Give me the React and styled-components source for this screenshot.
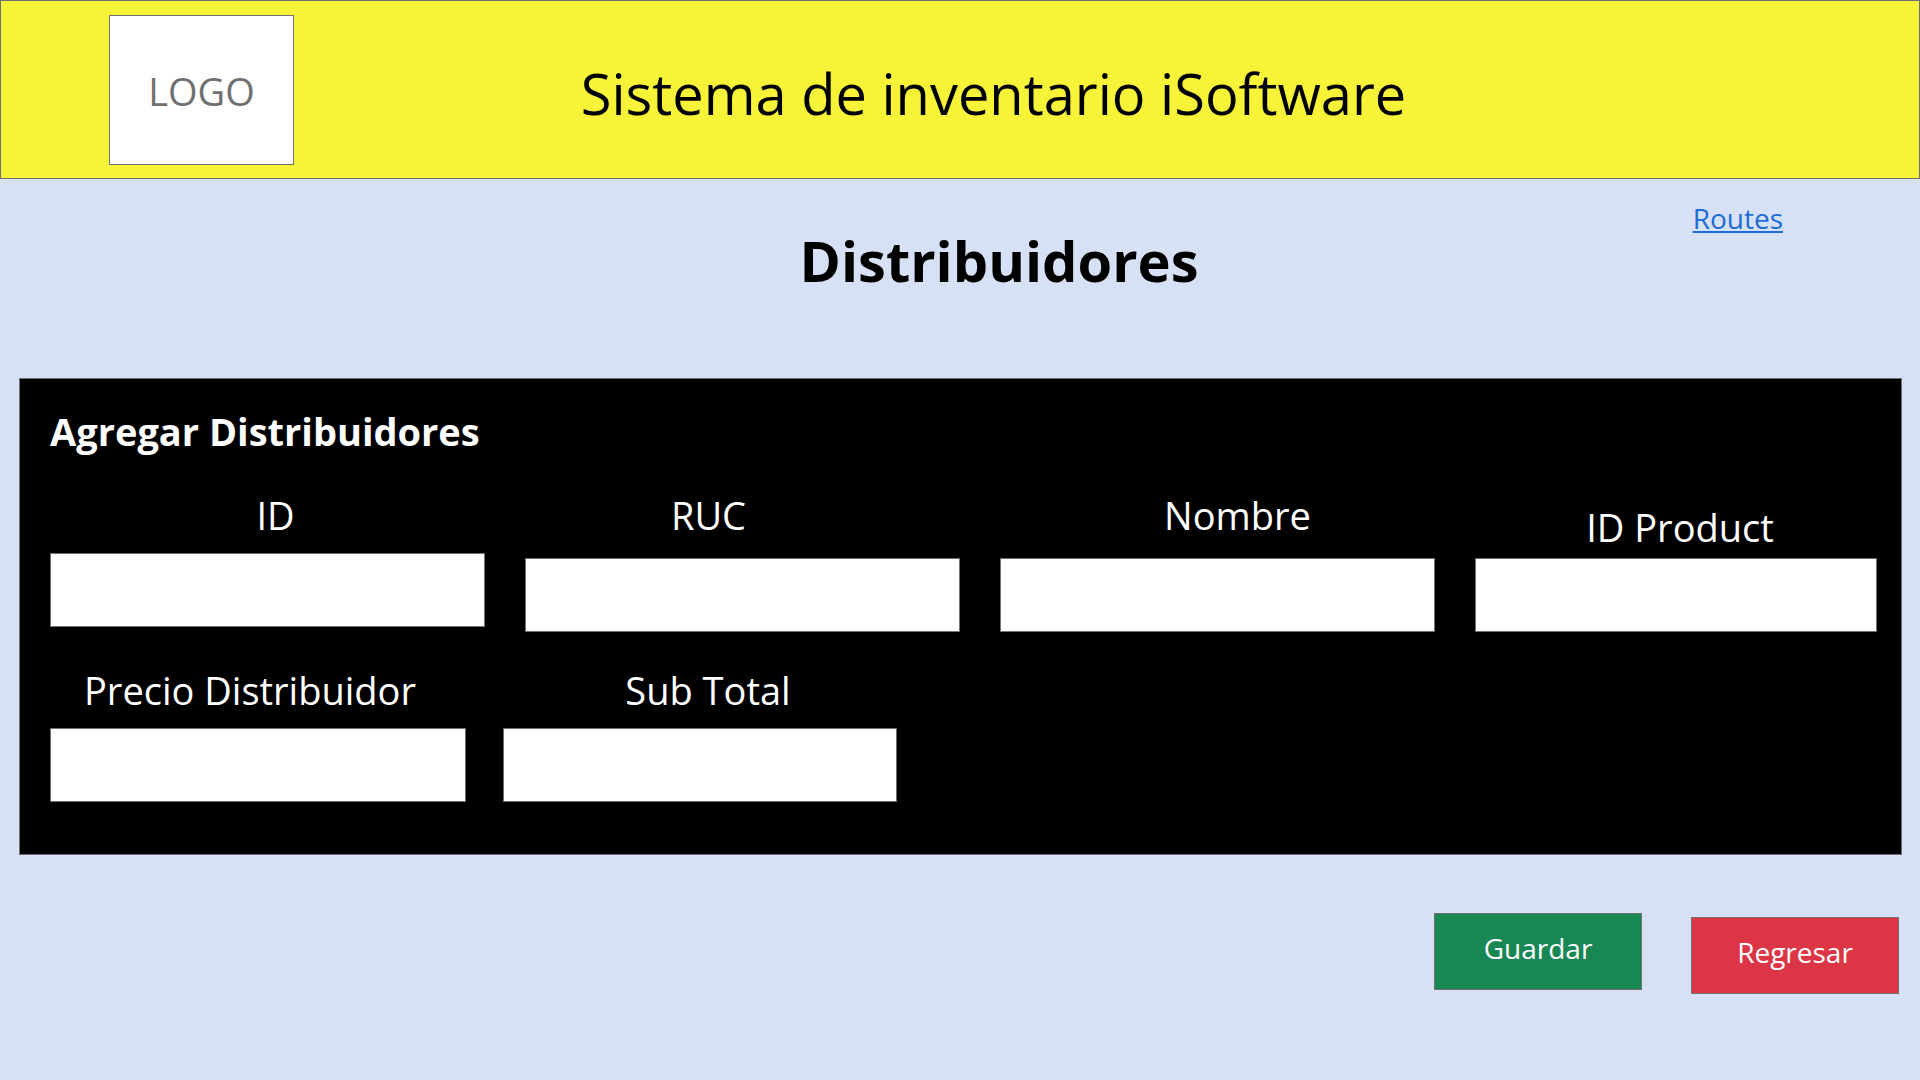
import React from "react";
import styled, { createGlobalStyle } from "styled-components";

const GlobalStyle = createGlobalStyle`
  *, *::before, *::after { box-sizing: border-box; }
  body {
    margin: 0;
    min-height: 100vh;
    background: #d6e1f5;
    color: #000;
    font-family: "Segoe UI", "Open Sans", "Noto Sans", sans-serif;
  }
`;

const Header = styled.header`
  display: flex;
  align-items: center;
  padding: 14px 226px 13px 108px;
  border: 1px solid #707070;
  background: #f7f338;
`;

const Logo = styled.div`
  display: flex;
  align-items: center;
  justify-content: center;
  flex: none;
  width: 185px;
  height: 150px;
  padding-top: 2px;
  border: 1px solid #707070;
  background: #fff;
  color: #707070;
  font-size: 38px;
  line-height: 52px;
`;

const SystemName = styled.h1`
  flex: 1;
  margin: 0;
  padding-top: 6px;
  text-align: center;
  font-size: 56px;
  font-weight: 400;
  line-height: 76px;
  white-space: nowrap;
`;

const Nav = styled.nav`
  display: flex;
  justify-content: flex-end;
  padding: 23px 137px 0 0;
`;

const NavLink = styled.a`
  color: #1e6cd6;
  font-size: 28px;
  line-height: 32px;
  text-decoration: underline;
`;

const PageTitle = styled.h2`
  margin: 0 0 92px;
  padding-left: 78px;
  text-align: center;
  font-size: 56px;
  font-weight: 700;
  line-height: 52px;
`;

const Panel = styled.section`
  margin: 0 18px 0 19px;
  padding: 26px 24px 52px 30px;
  border: 1px solid #707070;
  background: #000;
  color: #fff;
`;

const PanelTitle = styled.h3`
  margin: 0 0 32px;
  font-size: 38px;
  font-weight: 700;
  line-height: 52px;
`;

const FieldRow = styled.div`
  display: grid;
  grid-template-columns: ${(p) => p.$columns};
  column-gap: ${(p) => p.$gap}px;
  & + & { margin-top: 32px; }
`;

const FieldBox = styled.div`
  display: flex;
  flex-direction: column;
  align-self: ${(p) => p.$align || "start"};
  gap: ${(p) => p.$gap}px;
`;

const Label = styled.label`
  padding-left: ${(p) => p.$left || 0}px;
  padding-right: ${(p) => p.$right || 0}px;
  text-align: center;
  font-size: 38px;
  line-height: 52px;
  white-space: nowrap;
`;

const Input = styled.input`
  width: 100%;
  height: 74px;
  padding: 0 16px;
  border: 1px solid #707070;
  border-radius: 0;
  background: #fff;
  color: #000;
  font: inherit;
  font-size: 28px;
`;

const Actions = styled.div`
  display: flex;
  align-items: flex-start;
  justify-content: flex-end;
  gap: 49px;
  padding: 58px 21px 0 0;
`;

const Button = styled.button`
  width: 208px;
  height: 77px;
  margin-top: ${(p) => p.$drop || 0}px;
  padding: 0 0 8px;
  border: 1px solid #707070;
  background: ${(p) => p.$color};
  color: #fff;
  font: inherit;
  font-size: 28px;
  line-height: 40px;
  cursor: pointer;
`;

function Field({ id, label, gap = 12, align, left, right }) {
  return (
    <FieldBox $gap={gap} $align={align}>
      <Label htmlFor={id} $left={left} $right={right}>{label}</Label>
      <Input id={id} name={id} type="text" />
    </FieldBox>
  );
}

export default function App() {
  return (
    <>
      <GlobalStyle />
      <Header>
        <Logo>LOGO</Logo>
        <SystemName>Sistema de inventario iSoftware</SystemName>
      </Header>
      <Nav>
        <NavLink href="#routes">Routes</NavLink>
      </Nav>
      <main>
        <PageTitle>Distribuidores</PageTitle>
        <form onSubmit={(e) => e.preventDefault()}>
          <Panel>
            <PanelTitle>Agregar Distribuidores</PanelTitle>
            <FieldRow $columns="435fr 435fr 435fr 402fr" $gap={40}>
              <Field id="id" label="ID" left={16} />
              <Field id="ruc" label="RUC" gap={17} right={68} />
              <Field id="nombre" label="Nombre" gap={17} left={40} />
              <Field id="id-product" label="ID Product" gap={5} align="end" left={8} />
            </FieldRow>
            <FieldRow $columns="416fr 394fr 943fr" $gap={37}>
              <Field id="precio" label="Precio Distribuidor" right={16} />
              <Field id="sub-total" label="Sub Total" left={16} />
            </FieldRow>
          </Panel>
          <Actions>
            <Button type="submit" $color="#198754">Guardar</Button>
            <Button type="button" $color="#dc3545" $drop={4}>Regresar</Button>
          </Actions>
        </form>
      </main>
    </>
  );
}
